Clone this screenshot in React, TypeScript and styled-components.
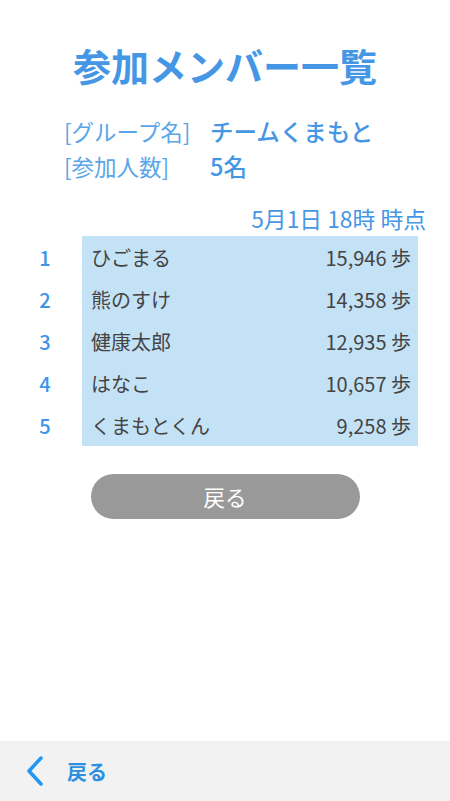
import { FC } from "react";
import styled, { createGlobalStyle } from "styled-components";

const BLUE = "#4597e5";

const GlobalStyle = createGlobalStyle`
  body {
    margin: 0;
    background: #ffffff;
    font-family: "Noto Sans CJK JP", "Noto Sans", sans-serif;
  }
`;

const Page = styled.div`
  width: 450px;
  min-height: 801px;
  display: flex;
  flex-direction: column;
`;

const Main = styled.main`
  flex: 1;
  display: flex;
  flex-direction: column;
  padding-top: 46px;
`;

const Title = styled.h1`
  margin: 0;
  text-align: center;
  font-size: 38px;
  line-height: 38px;
  font-weight: 700;
  color: ${BLUE};
  letter-spacing: 0;
`;

const Info = styled.dl`
  margin: 30px 0 0;
  padding-left: 64px;
  display: grid;
  grid-template-columns: 146px 1fr;
  grid-auto-rows: 35px;
  align-items: center;
  font-size: 22.5px;
  line-height: 35px;
`;

const Label = styled.dt`
  color: #5aa6e8;
  font-weight: 400;
`;

const Value = styled.dd`
  margin: 0;
  color: ${BLUE};
  font-weight: 500;
  font-size: 23.5px;
`;

const Stamp = styled.div`
  margin-top: 20px;
  padding-right: 24px;
  text-align: right;
  font-size: 22.8px;
  line-height: 30px;
  color: ${BLUE};
`;

const Ranking = styled.ol`
  list-style: none;
  margin: 2px 0 0;
  padding: 0;
  display: flex;
  flex-direction: column;
`;

const Row = styled.li`
  display: flex;
  height: 42px;
  align-items: center;
`;

const Rank = styled.span`
  width: 82px;
  padding-left: 8px;
  box-sizing: border-box;
  text-align: center;
  font-size: 20px;
  font-weight: 500;
  color: #3d95e8;
`;

const Cell = styled.div`
  width: 336px;
  height: 100%;
  box-sizing: border-box;
  padding: 1px 7px 0 9px;
  display: flex;
  justify-content: space-between;
  align-items: center;
  background: #c4e2f6;
  font-size: 20px;
  color: #444444;
`;

const BackButton = styled.button`
  all: unset;
  cursor: pointer;
  align-self: center;
  margin-top: 28px;
  width: 269px;
  height: 45px;
  border-radius: 23px;
  background: #999999;
  color: #ffffff;
  font-size: 21.5px;
  text-align: center;
  line-height: 45px;
`;

const Footer = styled.footer`
  height: 60px;
  background: #f2f2f2;
  display: flex;
  align-items: center;
  padding-left: 25px;
  gap: 22px;
`;

const FooterLink = styled.span`
  font-size: 20px;
  font-weight: 700;
  color: #2e90e0;
`;

const members = [
  { name: "ひごまる", steps: "15,946" },
  { name: "熊のすけ", steps: "14,358" },
  { name: "健康太郎", steps: "12,935" },
  { name: "はなこ", steps: "10,657" },
  { name: "くまもとくん", steps: "9,258" },
];

const Chevron: FC = () => (
  <svg width="20" height="30" viewBox="0 0 20 30">
    <path
      d="M16 2 L4 15 L16 28"
      fill="none"
      stroke="#2196f3"
      strokeWidth="3.5"
      strokeLinecap="round"
      strokeLinejoin="round"
    />
  </svg>
);

const App: FC = () => {
  return (
    <>
      <GlobalStyle />
      <Page>
        <Main>
          <Title>参加メンバー一覧</Title>
          <Info>
            <Label>[グループ名]</Label>
            <Value>チームくまもと</Value>
            <Label>[参加人数]</Label>
            <Value>5名</Value>
          </Info>
          <Stamp>5月1日 18時 時点</Stamp>
          <Ranking>
            {members.map((m, i) => (
              <Row key={m.name}>
                <Rank>{i + 1}</Rank>
                <Cell>
                  <span>{m.name}</span>
                  <span>{m.steps} 歩</span>
                </Cell>
              </Row>
            ))}
          </Ranking>
          <BackButton type="button">戻る</BackButton>
        </Main>
        <Footer>
          <Chevron />
          <FooterLink>戻る</FooterLink>
        </Footer>
      </Page>
    </>
  );
};

export default App;
